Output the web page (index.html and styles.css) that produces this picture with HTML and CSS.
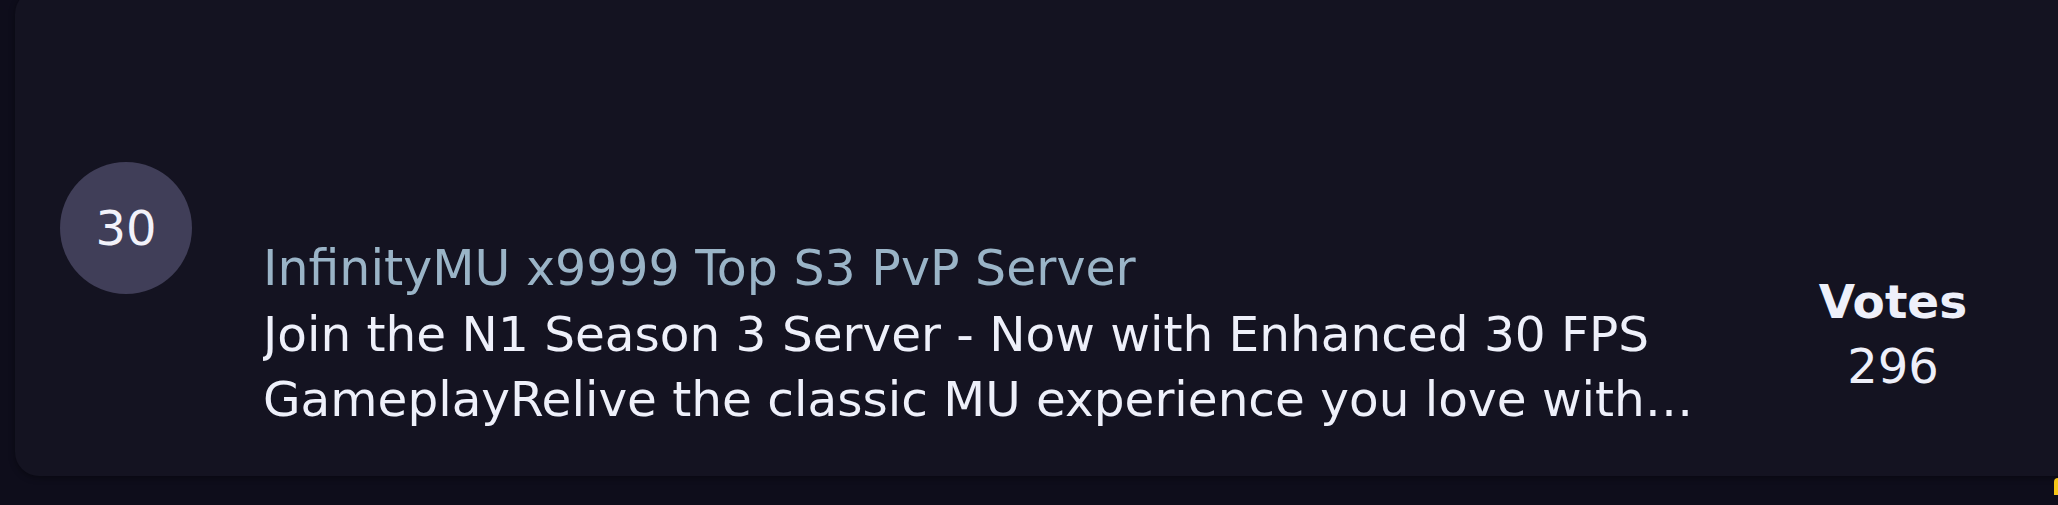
FILE: index.html
```html
<!DOCTYPE html>
<html lang="en">
<head>
<meta charset="utf-8">
<title>Server list</title>
<link rel="stylesheet" href="styles.css">
</head>
<body>
<div class="page">
  <div class="card">
    <div class="rank">30</div>
    <div class="body">
      <div class="banner"></div>
      <div class="row">
        <div class="info">
          <div class="title">InfinityMU x9999 Top S3 PvP Server</div>
          <div class="desc">Join the N1 Season 3 Server - Now with Enhanced 30 FPS GameplayRelive the classic MU experience you love with the best community and events every day.</div>
        </div>
        <div class="votes">
          <div class="votes-label">Votes</div>
          <div class="votes-count">296</div>
        </div>
      </div>
    </div>
  </div>
  <div class="next"><span class="gold"></span></div>
</div>
</body>
</html>
```

FILE: styles.css
```css
html, body {
  margin: 0;
  padding: 0;
  background: #0e0d1b;
  overflow: hidden;
}
.page {
  width: 2058px;
  height: 505px;
  font-family: "DejaVu Sans", Verdana, sans-serif;
  color: #eef0fa;
}
.card {
  margin: -10px -40px 0 15px;
  height: 486px;
  box-sizing: border-box;
  background: #141321;
  border-radius: 24px;
  box-shadow: 0 2px 6px rgba(0,0,0,0.35);
  display: flex;
  align-items: center;
  padding: 0 45px;
}
.rank {
  flex: none;
  width: 132px;
  height: 132px;
  margin-bottom: 10px;
  border-radius: 50%;
  background: #403e58;
  color: #f2f2fa;
  font-size: 48px;
  display: flex;
  align-items: center;
  justify-content: center;
}
.body {
  flex: 1;
  align-self: stretch;
  display: flex;
  flex-direction: column;
  margin-left: 71px;
}
.banner {
  height: 246px;
  flex: none;
}
.row {
  display: flex;
  align-items: center;
}
.info {
  width: 1434px;
  flex: none;
}
.title {
  font-size: 49px;
  line-height: 66px;
  color: #9ab4c7;
  white-space: nowrap;
}
.desc {
  font-size: 48.5px;
  line-height: 65px;
  color: #eef0fa;
  display: -webkit-box;
  -webkit-line-clamp: 2;
  -webkit-box-orient: vertical;
  overflow: hidden;
}
.votes {
  width: 300px;
  margin-left: 46px;
  text-align: center;
}
.votes-label {
  font-weight: bold;
  font-size: 47px;
  line-height: 65px;
}
.votes-count {
  font-size: 48px;
  line-height: 65px;
}
.next {
  display: flex;
  justify-content: flex-end;
  padding-top: 2px;
}
.gold {
  width: 4px;
  height: 30px;
  background: #f5c518;
  border-top-left-radius: 4px;
}
```
